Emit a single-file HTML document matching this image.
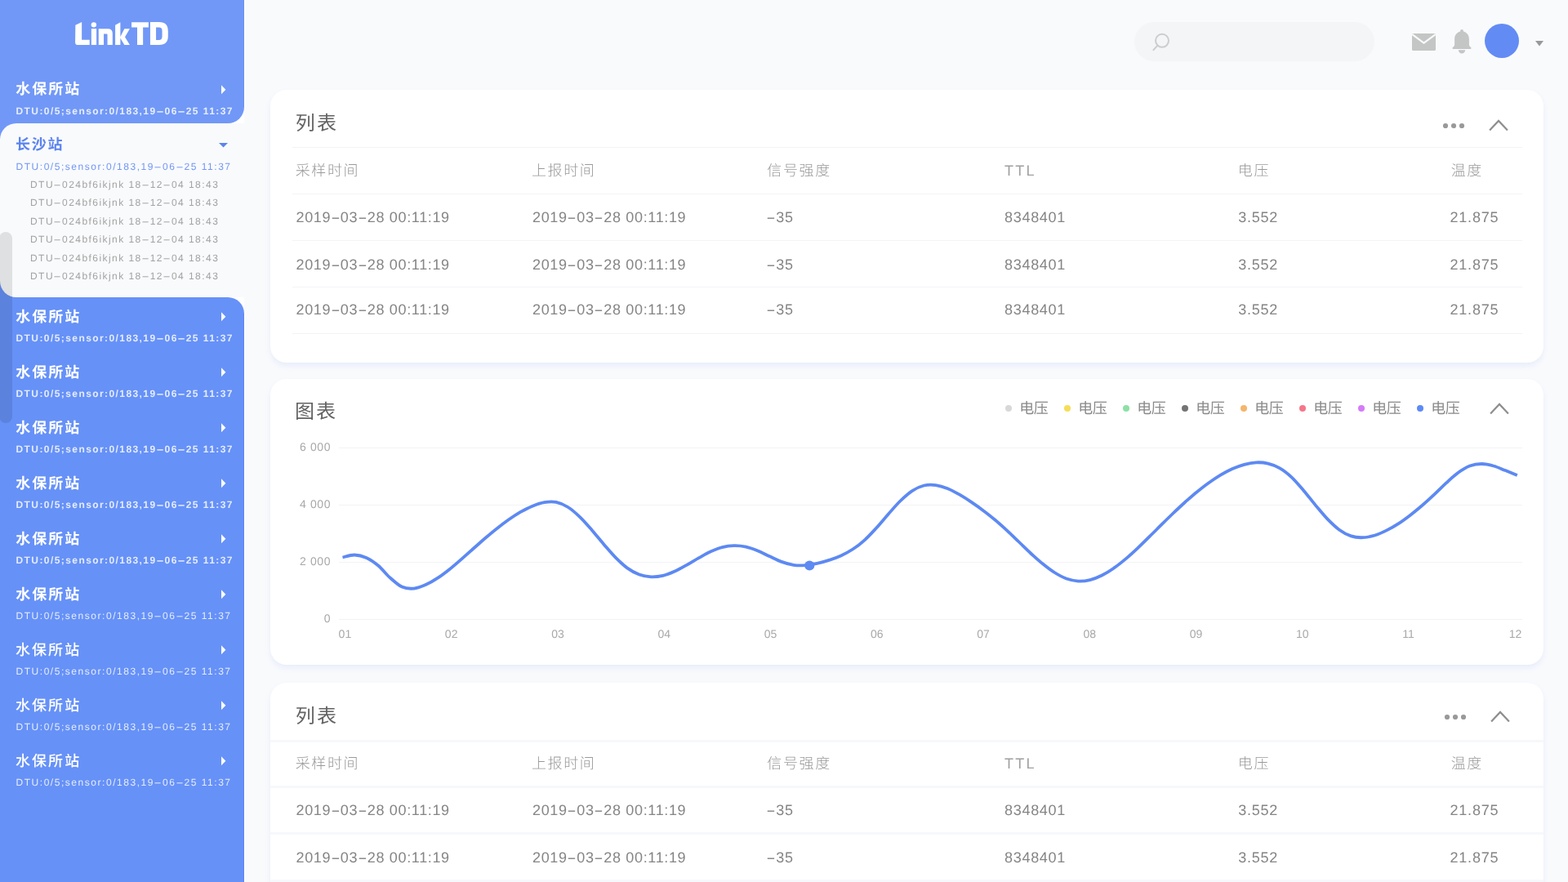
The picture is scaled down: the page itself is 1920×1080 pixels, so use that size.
<!DOCTYPE html>
<html lang="zh"><head><meta charset="utf-8"><title>LinkTD</title>
<style>
html,body{margin:0;padding:0}
body{width:1920px;height:1080px;overflow:hidden;position:relative;background:#f9fafc;font-family:"Liberation Sans",sans-serif;text-rendering:geometricPrecision}
#w{position:absolute;left:0;top:0;width:1920px;height:1080px;will-change:transform}
.b{position:absolute;display:block}
.t{position:absolute;white-space:nowrap}
.h12{display:inline-block;transform:scaleX(2.4);letter-spacing:0;margin:0 3.75px 0 2.25px}
.h18{display:inline-block;transform:scaleX(1.9);letter-spacing:0;margin:0 3.2px 0 2.5px}
.cj{position:absolute;display:block;white-space:nowrap;font-family:"Liberation Sans","Noto Sans CJK SC",sans-serif}
.sb{font-size:18px;line-height:18px;color:#fff;font-weight:700;letter-spacing:2.05px}
.sm{font-size:18px;line-height:18px;color:#fff;font-weight:500;letter-spacing:2.05px}
.ti{font-size:24px;line-height:24px;color:#636363;font-weight:400}
.th{font-size:18px;line-height:18px;color:#9a9a9a;font-weight:300;letter-spacing:1.6px}
.lg{font-size:18px;line-height:18px;color:#8a8a8a;font-weight:400;letter-spacing:-0.5px}
</style></head><body>
<div id="w">

<!-- sidebar -->
<div class="b" style="left:279px;top:131px;width:20px;height:20px;background:#fff;"></div>
<div class="b" style="left:279px;top:364px;width:20px;height:20px;background:#fff;"></div>
<div class="b" style="left:0px;top:0px;width:299px;height:151px;background:#7198f7;border-radius:0 0 20px 0;"></div>
<div class="b" style="left:0px;top:364px;width:299px;height:716px;background:#6691f7;border-radius:0 20px 0 0;"></div>
<div class="b" style="left:0px;top:151px;width:20px;height:20px;background:#7198f7;"></div>
<div class="b" style="left:0px;top:344px;width:20px;height:20px;background:#6691f7;"></div>
<div class="b" style="left:0px;top:151px;width:299px;height:213px;background:#f9fafc;border-radius:20px 0 0 20px;"></div>
<div class="b" style="left:299px;top:0px;width:1px;height:131px;background:#fff;"></div>
<div class="b" style="left:299px;top:384px;width:1px;height:696px;background:#fff;"></div>
<div class="b" style="left:298px;top:0px;width:1px;height:131px;background:#6890f6;"></div>
<div class="b" style="left:298px;top:384px;width:1px;height:696px;background:#5e8af6;"></div>
<svg class="b" style="left:60px;top:10px" width="180" height="101" viewBox="0 0 1920 1077" fill="#fff"><path d="M345,222 L428,182 L428,412 L530,412 L530,480 L378,480 Q342,480 342,444 Z"/><circle cx="585" cy="217" r="34"/><rect x="553" y="268" width="67" height="212"/><path d="M648,268 L770,268 Q830,268 830,330 L830,480 L763,480 L763,345 Q763,335 753,335 L715,335 L715,480 L648,480 Z"/><path d="M865,222 L932,185 L932,372 L985,270 L1055,270 L992,376 L1055,480 L985,480 L932,392 L932,480 L865,480 Z"/><path d="M1078,185 L1300,185 L1300,250 L1228,250 L1228,480 L1152,480 L1152,250 L1078,250 Z"/><path fill-rule="evenodd" d="M1322,182 L1440,182 Q1555,182 1555,300 L1555,365 Q1555,480 1440,480 L1322,480 Z M1398,250 L1435,250 Q1478,250 1478,295 L1478,370 Q1478,415 1435,415 L1398,415 Z"/></svg>
<span class="cj sb" style="left:19.14px;top:100.37px;width:78.15px;height:18.00px;">水保所站</span>
<div class="t" style="left:19.50px;top:127.50px;font-size:12px;line-height:17px;color:rgba(255,255,255,.82);letter-spacing:1.42px;font-weight:700;">DTU:0/5;sensor:0/183,19<span class="h12">-</span>06<span class="h12">-</span>25 11:37</div>
<svg class="b" style="left:271px;top:103.80px" width="6" height="12" viewBox="0 0 6 12"><path d="M0,0.3 L5.4,5.8 L0,11.3Z" fill="#fff"/></svg>
<span class="cj" style="left:19.03px;top:168.44px;width:57.60px;height:18.00px;font-size:18px;line-height:18px;color:#5b84ef;font-weight:700;letter-spacing:1.8px;">长沙站</span>
<div class="t" style="left:19.50px;top:195.80px;font-size:12px;line-height:17px;color:#7297f3;letter-spacing:1.54px;">DTU:0/5;sensor:0/183,19<span class="h12">-</span>06<span class="h12">-</span>25 11:37</div>
<svg class="b" style="left:268px;top:175px" width="11" height="6" viewBox="0 0 11 6"><path d="M0,0 L11,0 L5.5,5.4Z" fill="#5b84ef"/></svg>
<div class="t" style="left:37.00px;top:217.90px;font-size:12px;line-height:17px;color:#a3a3a3;letter-spacing:1.45px;">DTU<span class="h12">-</span>024bf6ikjnk 18<span class="h12">-</span>12<span class="h12">-</span>04 18:43</div>
<div class="t" style="left:37.00px;top:240.35px;font-size:12px;line-height:17px;color:#a3a3a3;letter-spacing:1.45px;">DTU<span class="h12">-</span>024bf6ikjnk 18<span class="h12">-</span>12<span class="h12">-</span>04 18:43</div>
<div class="t" style="left:37.00px;top:262.80px;font-size:12px;line-height:17px;color:#a3a3a3;letter-spacing:1.45px;">DTU<span class="h12">-</span>024bf6ikjnk 18<span class="h12">-</span>12<span class="h12">-</span>04 18:43</div>
<div class="t" style="left:37.00px;top:285.25px;font-size:12px;line-height:17px;color:#a3a3a3;letter-spacing:1.45px;">DTU<span class="h12">-</span>024bf6ikjnk 18<span class="h12">-</span>12<span class="h12">-</span>04 18:43</div>
<div class="t" style="left:37.00px;top:307.70px;font-size:12px;line-height:17px;color:#a3a3a3;letter-spacing:1.45px;">DTU<span class="h12">-</span>024bf6ikjnk 18<span class="h12">-</span>12<span class="h12">-</span>04 18:43</div>
<div class="t" style="left:37.00px;top:330.15px;font-size:12px;line-height:17px;color:#a3a3a3;letter-spacing:1.45px;">DTU<span class="h12">-</span>024bf6ikjnk 18<span class="h12">-</span>12<span class="h12">-</span>04 18:43</div>
<span class="cj sb" style="left:19.14px;top:378.57px;width:78.15px;height:18.00px;">水保所站</span>
<div class="t" style="left:19.50px;top:405.70px;font-size:12px;line-height:17px;color:rgba(255,255,255,.82);letter-spacing:1.42px;font-weight:700;">DTU:0/5;sensor:0/183,19<span class="h12">-</span>06<span class="h12">-</span>25 11:37</div>
<svg class="b" style="left:271px;top:382.00px" width="6" height="12" viewBox="0 0 6 12"><path d="M0,0.3 L5.4,5.8 L0,11.3Z" fill="#fff"/></svg>
<span class="cj sb" style="left:19.14px;top:446.57px;width:78.15px;height:18.00px;">水保所站</span>
<div class="t" style="left:19.50px;top:473.70px;font-size:12px;line-height:17px;color:rgba(255,255,255,.82);letter-spacing:1.42px;font-weight:700;">DTU:0/5;sensor:0/183,19<span class="h12">-</span>06<span class="h12">-</span>25 11:37</div>
<svg class="b" style="left:271px;top:450.00px" width="6" height="12" viewBox="0 0 6 12"><path d="M0,0.3 L5.4,5.8 L0,11.3Z" fill="#fff"/></svg>
<span class="cj sb" style="left:19.14px;top:514.57px;width:78.15px;height:18.00px;">水保所站</span>
<div class="t" style="left:19.50px;top:541.70px;font-size:12px;line-height:17px;color:rgba(255,255,255,.82);letter-spacing:1.42px;font-weight:700;">DTU:0/5;sensor:0/183,19<span class="h12">-</span>06<span class="h12">-</span>25 11:37</div>
<svg class="b" style="left:271px;top:518.00px" width="6" height="12" viewBox="0 0 6 12"><path d="M0,0.3 L5.4,5.8 L0,11.3Z" fill="#fff"/></svg>
<span class="cj sb" style="left:19.14px;top:582.57px;width:78.15px;height:18.00px;">水保所站</span>
<div class="t" style="left:19.50px;top:609.70px;font-size:12px;line-height:17px;color:rgba(255,255,255,.82);letter-spacing:1.42px;font-weight:700;">DTU:0/5;sensor:0/183,19<span class="h12">-</span>06<span class="h12">-</span>25 11:37</div>
<svg class="b" style="left:271px;top:586.00px" width="6" height="12" viewBox="0 0 6 12"><path d="M0,0.3 L5.4,5.8 L0,11.3Z" fill="#fff"/></svg>
<span class="cj sb" style="left:19.14px;top:650.57px;width:78.15px;height:18.00px;">水保所站</span>
<div class="t" style="left:19.50px;top:677.70px;font-size:12px;line-height:17px;color:rgba(255,255,255,.82);letter-spacing:1.42px;font-weight:700;">DTU:0/5;sensor:0/183,19<span class="h12">-</span>06<span class="h12">-</span>25 11:37</div>
<svg class="b" style="left:271px;top:654.00px" width="6" height="12" viewBox="0 0 6 12"><path d="M0,0.3 L5.4,5.8 L0,11.3Z" fill="#fff"/></svg>
<span class="cj sb" style="left:19.14px;top:718.57px;width:78.15px;height:18.00px;">水保所站</span>
<div class="t" style="left:19.50px;top:745.70px;font-size:12px;line-height:17px;color:rgba(255,255,255,.82);letter-spacing:1.54px;">DTU:0/5;sensor:0/183,19<span class="h12">-</span>06<span class="h12">-</span>25 11:37</div>
<svg class="b" style="left:271px;top:722.00px" width="6" height="12" viewBox="0 0 6 12"><path d="M0,0.3 L5.4,5.8 L0,11.3Z" fill="#fff"/></svg>
<span class="cj sm" style="left:19.00px;top:786.59px;width:78.15px;height:18.00px;">水保所站</span>
<div class="t" style="left:19.50px;top:813.70px;font-size:12px;line-height:17px;color:rgba(255,255,255,.82);letter-spacing:1.54px;">DTU:0/5;sensor:0/183,19<span class="h12">-</span>06<span class="h12">-</span>25 11:37</div>
<svg class="b" style="left:271px;top:790.00px" width="6" height="12" viewBox="0 0 6 12"><path d="M0,0.3 L5.4,5.8 L0,11.3Z" fill="#fff"/></svg>
<span class="cj sm" style="left:19.00px;top:854.59px;width:78.15px;height:18.00px;">水保所站</span>
<div class="t" style="left:19.50px;top:881.70px;font-size:12px;line-height:17px;color:rgba(255,255,255,.82);letter-spacing:1.54px;">DTU:0/5;sensor:0/183,19<span class="h12">-</span>06<span class="h12">-</span>25 11:37</div>
<svg class="b" style="left:271px;top:858.00px" width="6" height="12" viewBox="0 0 6 12"><path d="M0,0.3 L5.4,5.8 L0,11.3Z" fill="#fff"/></svg>
<span class="cj sm" style="left:19.00px;top:922.59px;width:78.15px;height:18.00px;">水保所站</span>
<div class="t" style="left:19.50px;top:949.70px;font-size:12px;line-height:17px;color:rgba(255,255,255,.82);letter-spacing:1.54px;">DTU:0/5;sensor:0/183,19<span class="h12">-</span>06<span class="h12">-</span>25 11:37</div>
<svg class="b" style="left:271px;top:926.00px" width="6" height="12" viewBox="0 0 6 12"><path d="M0,0.3 L5.4,5.8 L0,11.3Z" fill="#fff"/></svg>
<div class="b" style="left:-1.2px;top:283.7px;width:15.8px;height:234px;background:rgba(0,0,0,.10);border-radius:7.9px;"></div>
<!-- header -->
<div class="b" style="left:1389px;top:27px;width:294px;height:48px;background:#f4f5f7;border-radius:24px;"></div>
<svg class="b" style="left:1405px;top:36px" width="32" height="32" viewBox="0 0 32 32" fill="none" stroke="#cdcdcd" stroke-width="2"><circle cx="18" cy="13.8" r="8"/><path d="M12.5,19.6 L7.4,25.2" stroke-linecap="round"/></svg>
<svg class="b" style="left:1729px;top:41px" width="29" height="21" viewBox="0 0 29 21"><rect width="29" height="21" rx="1.6" fill="#c4c6c5"/><path d="M0.3,1.2 L14.5,11.6 L28.7,1.2" fill="none" stroke="#f9fafc" stroke-width="2.1"/></svg>
<svg class="b" style="left:1777px;top:35px" width="26" height="31" viewBox="0 0 26 31" fill="#c4c6c5"><path d="M13,1 a1.9,1.9 0 0 1 1.9,1.9 v0.7 c4.2,1 7,4.6 7,9.3 v6.6 c0,1.6 0.9,2.6 2.2,3.6 c0.8,0.6 0.5,1.9 -0.6,1.9 H2.5 c-1.1,0 -1.4,-1.3 -0.6,-1.9 c1.3,-1 2.2,-2 2.2,-3.6 v-6.6 c0,-4.7 2.8,-8.3 7,-9.3 v-0.7 A1.9,1.9 0 0 1 13,1z"/><path d="M8.8,26.2 h8.4 a4.2,4.2 0 0 1 -8.4,0z"/></svg>
<div class="b" style="left:1818px;top:29px;width:42px;height:42px;background:#628bf4;border-radius:50%;"></div>
<svg class="b" style="left:1880px;top:50px" width="10" height="7" viewBox="0 0 10 7"><path d="M0,0 L10,0 L5,6.6Z" fill="#999"/></svg>
<!-- table card -->
<div class="b" style="left:331px;top:110px;width:1559px;height:334px;background:#fff;border-radius:20px;box-shadow:0 4px 7px rgba(70,120,245,.095);"></div>
<span class="cj ti" style="left:361.73px;top:139.54px;width:50.25px;height:24.00px;letter-spacing:2.25px;">列表</span>
<svg class="b" style="left:1766.00px;top:150.06px" width="30" height="8" viewBox="0 0 30 8" fill="#999"><circle cx="4" cy="4" r="3.1"/><circle cx="14" cy="4" r="3.1"/><circle cx="24" cy="4" r="3.1"/></svg>
<svg class="b" style="left:1822.30px;top:145.00px" width="26" height="17" viewBox="0 0 26 17" fill="none" stroke="#8e8e8e" stroke-width="2.2"><path d="M2.1,14.4 L13,2.9 L23.9,14.4"/></svg>
<div class="b" style="left:358px;top:180px;width:1506px;height:1px;background:#f3f4f7;"></div>
<div class="b" style="left:358px;top:237px;width:1506px;height:1px;background:#f3f4f7;"></div>
<div class="b" style="left:358px;top:294px;width:1506px;height:1px;background:#f3f4f7;"></div>
<div class="b" style="left:358px;top:351px;width:1506px;height:1px;background:#f3f4f7;"></div>
<div class="b" style="left:358px;top:408px;width:1506px;height:1px;background:#f3f4f7;"></div>
<span class="cj th" style="left:361.74px;top:199.76px;width:76.80px;height:18.00px;">采样时间</span>
<span class="cj th" style="left:650.99px;top:199.74px;width:76.80px;height:18.00px;">上报时间</span>
<span class="cj th" style="left:939.33px;top:199.71px;width:76.80px;height:18.00px;">信号强度</span>
<div class="t" style="left:1230.00px;top:197.05px;font-size:18px;line-height:25px;color:#a0a0a0;letter-spacing:2.2px;">TTL</div>
<span class="cj th" style="left:1515.82px;top:199.77px;width:37.60px;height:18.00px;">电压</span>
<span class="cj th" style="left:1776.69px;top:199.78px;width:37.60px;height:18.00px;">温度</span>
<div class="t" style="left:362.50px;top:254.40px;font-size:18px;line-height:25px;color:#858585;letter-spacing:0.65px;">2019<span class="h18">-</span>03<span class="h18">-</span>28 00:11:19</div>
<div class="t" style="left:652.00px;top:254.40px;font-size:18px;line-height:25px;color:#858585;letter-spacing:0.65px;">2019<span class="h18">-</span>03<span class="h18">-</span>28 00:11:19</div>
<div class="t" style="left:938.50px;top:254.40px;font-size:18px;line-height:25px;color:#858585;letter-spacing:0.7px;"><span class="h18">-</span>35</div>
<div class="t" style="left:1230.00px;top:254.40px;font-size:18px;line-height:25px;color:#858585;letter-spacing:0.7px;">8348401</div>
<div class="t" style="left:1516.25px;top:254.40px;font-size:18px;line-height:25px;color:#858585;letter-spacing:0.74px;">3.552</div>
<div class="t" style="left:1775.50px;top:254.40px;font-size:18px;line-height:25px;color:#858585;letter-spacing:0.8px;">21.875</div>
<div class="t" style="left:362.50px;top:312.40px;font-size:18px;line-height:25px;color:#858585;letter-spacing:0.65px;">2019<span class="h18">-</span>03<span class="h18">-</span>28 00:11:19</div>
<div class="t" style="left:652.00px;top:312.40px;font-size:18px;line-height:25px;color:#858585;letter-spacing:0.65px;">2019<span class="h18">-</span>03<span class="h18">-</span>28 00:11:19</div>
<div class="t" style="left:938.50px;top:312.40px;font-size:18px;line-height:25px;color:#858585;letter-spacing:0.7px;"><span class="h18">-</span>35</div>
<div class="t" style="left:1230.00px;top:312.40px;font-size:18px;line-height:25px;color:#858585;letter-spacing:0.7px;">8348401</div>
<div class="t" style="left:1516.25px;top:312.40px;font-size:18px;line-height:25px;color:#858585;letter-spacing:0.74px;">3.552</div>
<div class="t" style="left:1775.50px;top:312.40px;font-size:18px;line-height:25px;color:#858585;letter-spacing:0.8px;">21.875</div>
<div class="t" style="left:362.50px;top:367.40px;font-size:18px;line-height:25px;color:#858585;letter-spacing:0.65px;">2019<span class="h18">-</span>03<span class="h18">-</span>28 00:11:19</div>
<div class="t" style="left:652.00px;top:367.40px;font-size:18px;line-height:25px;color:#858585;letter-spacing:0.65px;">2019<span class="h18">-</span>03<span class="h18">-</span>28 00:11:19</div>
<div class="t" style="left:938.50px;top:367.40px;font-size:18px;line-height:25px;color:#858585;letter-spacing:0.7px;"><span class="h18">-</span>35</div>
<div class="t" style="left:1230.00px;top:367.40px;font-size:18px;line-height:25px;color:#858585;letter-spacing:0.7px;">8348401</div>
<div class="t" style="left:1516.25px;top:367.40px;font-size:18px;line-height:25px;color:#858585;letter-spacing:0.74px;">3.552</div>
<div class="t" style="left:1775.50px;top:367.40px;font-size:18px;line-height:25px;color:#858585;letter-spacing:0.8px;">21.875</div>
<!-- chart card -->
<div class="b" style="left:331px;top:464px;width:1559px;height:350px;background:#fff;border-radius:20px;box-shadow:0 4px 7px rgba(70,120,245,.095);"></div>
<span class="cj ti" style="left:360.98px;top:492.80px;width:50.10px;height:24.00px;letter-spacing:2.1px;">图表</span>
<div class="b" style="left:1231px;top:496px;width:8px;height:8px;background:#d8d8d8;border-radius:50%;"></div>
<span class="cj lg" style="left:1248.28px;top:490.59px;width:35.50px;height:18.00px;">电压</span>
<div class="b" style="left:1303px;top:496px;width:8px;height:8px;background:#f5de57;border-radius:50%;"></div>
<span class="cj lg" style="left:1320.28px;top:490.59px;width:35.50px;height:18.00px;">电压</span>
<div class="b" style="left:1375px;top:496px;width:8px;height:8px;background:#8de0a6;border-radius:50%;"></div>
<span class="cj lg" style="left:1392.28px;top:490.59px;width:35.50px;height:18.00px;">电压</span>
<div class="b" style="left:1447px;top:496px;width:8px;height:8px;background:#747474;border-radius:50%;"></div>
<span class="cj lg" style="left:1464.28px;top:490.59px;width:35.50px;height:18.00px;">电压</span>
<div class="b" style="left:1519px;top:496px;width:8px;height:8px;background:#f5b56b;border-radius:50%;"></div>
<span class="cj lg" style="left:1536.28px;top:490.59px;width:35.50px;height:18.00px;">电压</span>
<div class="b" style="left:1591px;top:496px;width:8px;height:8px;background:#f57789;border-radius:50%;"></div>
<span class="cj lg" style="left:1608.28px;top:490.59px;width:35.50px;height:18.00px;">电压</span>
<div class="b" style="left:1663px;top:496px;width:8px;height:8px;background:#d47bf9;border-radius:50%;"></div>
<span class="cj lg" style="left:1680.28px;top:490.59px;width:35.50px;height:18.00px;">电压</span>
<div class="b" style="left:1735px;top:496px;width:8px;height:8px;background:#5d8af6;border-radius:50%;"></div>
<span class="cj lg" style="left:1752.28px;top:490.59px;width:35.50px;height:18.00px;">电压</span>
<svg class="b" style="left:1823.00px;top:492.10px" width="26" height="17" viewBox="0 0 26 17" fill="none" stroke="#8e8e8e" stroke-width="2.2"><path d="M2.1,14.4 L13,2.9 L23.9,14.4"/></svg>
<div class="t" style="right:1514.90px;top:536.80px;font-size:14px;line-height:20px;color:#a8a8a8;letter-spacing:0.6px;">6 000</div>
<div class="b" style="left:414.5px;top:548px;width:1449px;height:1px;background:#f3f3f5;"></div>
<div class="t" style="right:1514.90px;top:606.80px;font-size:14px;line-height:20px;color:#a8a8a8;letter-spacing:0.6px;">4 000</div>
<div class="b" style="left:414.5px;top:618px;width:1449px;height:1px;background:#f3f3f5;"></div>
<div class="t" style="right:1514.90px;top:676.80px;font-size:14px;line-height:20px;color:#a8a8a8;letter-spacing:0.6px;">2 000</div>
<div class="b" style="left:414.5px;top:688px;width:1449px;height:1px;background:#f3f3f5;"></div>
<div class="t" style="right:1514.90px;top:746.80px;font-size:14px;line-height:20px;color:#a8a8a8;letter-spacing:0.6px;">0</div>
<div class="b" style="left:414.5px;top:758px;width:1449px;height:1px;background:#f3f3f5;"></div>
<div class="t" style="left:414.60px;top:766.25px;font-size:14px;line-height:20px;color:#a8a8a8;">01</div>
<div class="t" style="left:544.87px;top:766.25px;font-size:14px;line-height:20px;color:#a8a8a8;">02</div>
<div class="t" style="left:675.14px;top:766.25px;font-size:14px;line-height:20px;color:#a8a8a8;">03</div>
<div class="t" style="left:805.41px;top:766.25px;font-size:14px;line-height:20px;color:#a8a8a8;">04</div>
<div class="t" style="left:935.68px;top:766.25px;font-size:14px;line-height:20px;color:#a8a8a8;">05</div>
<div class="t" style="left:1065.95px;top:766.25px;font-size:14px;line-height:20px;color:#a8a8a8;">06</div>
<div class="t" style="left:1196.22px;top:766.25px;font-size:14px;line-height:20px;color:#a8a8a8;">07</div>
<div class="t" style="left:1326.49px;top:766.25px;font-size:14px;line-height:20px;color:#a8a8a8;">08</div>
<div class="t" style="left:1456.76px;top:766.25px;font-size:14px;line-height:20px;color:#a8a8a8;">09</div>
<div class="t" style="left:1587.03px;top:766.25px;font-size:14px;line-height:20px;color:#a8a8a8;">10</div>
<div class="t" style="left:1717.30px;top:766.25px;font-size:14px;line-height:20px;color:#a8a8a8;">11</div>
<div class="t" style="right:56.60px;top:766.25px;font-size:14px;line-height:20px;color:#a8a8a8;">12</div>
<svg class="b" style="left:331px;top:464px" width="1559" height="350" viewBox="331 464 1559 350"><path d="M419.5,682.5C421.9,682.0 429.2,679.5 434.0,679.5C438.9,679.6 443.7,680.7 448.6,682.9C453.4,685.1 458.2,688.4 463.1,692.5C467.9,696.6 472.8,703.0 477.6,707.4C482.5,711.7 487.3,716.4 492.1,718.6C497.0,720.8 501.8,721.0 506.7,720.6C511.5,720.2 516.4,718.2 521.2,716.1C526.0,714.0 530.9,711.1 535.7,707.9C540.6,704.8 545.4,701.1 550.3,697.2C555.1,693.4 559.9,689.1 564.8,684.9C569.6,680.8 574.5,676.3 579.3,672.0C584.2,667.8 589.0,663.4 593.8,659.3C598.7,655.1 603.5,651.0 608.4,647.2C613.2,643.3 618.1,639.6 622.9,636.2C627.7,632.9 632.6,629.7 637.4,626.9C642.3,624.2 647.1,621.7 652.0,619.7C656.8,617.8 661.6,616.0 666.5,615.2C671.3,614.4 676.2,614.0 681.0,614.9C685.9,615.9 690.7,617.9 695.5,621.0C700.4,624.0 705.2,628.4 710.1,633.1C714.9,637.7 719.8,643.4 724.6,648.9C729.4,654.5 734.3,660.6 739.1,666.2C744.0,671.8 748.8,677.7 753.7,682.6C758.5,687.4 763.3,692.1 768.2,695.6C773.0,699.1 777.9,701.7 782.7,703.5C787.5,705.3 792.4,706.1 797.2,706.4C802.1,706.6 806.9,706.0 811.8,704.9C816.6,703.8 821.4,701.8 826.3,699.6C831.1,697.5 836.0,694.6 840.8,691.9C845.7,689.2 850.5,686.1 855.3,683.4C860.2,680.7 865.0,677.8 869.9,675.6C874.7,673.4 879.6,671.4 884.4,670.2C889.2,668.9 894.1,668.2 898.9,668.1C903.8,668.0 908.6,668.5 913.5,669.6C918.3,670.6 923.1,672.5 928.0,674.4C932.8,676.4 937.7,679.1 942.5,681.3C947.4,683.6 952.2,686.2 957.0,687.9C961.9,689.7 966.7,691.1 971.6,691.8C976.4,692.6 981.3,692.5 986.1,692.2C990.9,691.9 995.8,691.0 1000.6,689.9C1005.5,688.9 1010.3,687.5 1015.2,685.9C1020.0,684.3 1024.8,682.6 1029.7,680.4C1034.5,678.2 1039.4,675.7 1044.2,672.5C1049.1,669.4 1053.9,665.7 1058.7,661.3C1063.6,657.0 1068.4,651.6 1073.3,646.3C1078.1,641.0 1083.0,635.0 1087.8,629.5C1092.6,624.0 1097.5,618.2 1102.3,613.5C1107.2,608.8 1112.0,604.2 1116.9,601.1C1121.7,597.9 1126.5,595.7 1131.4,594.5C1136.2,593.4 1141.1,593.5 1145.9,594.1C1150.8,594.8 1155.6,596.4 1160.4,598.3C1165.3,600.3 1170.1,603.0 1175.0,605.7C1179.8,608.5 1184.7,611.6 1189.5,614.9C1194.3,618.1 1199.2,621.5 1204.0,625.2C1208.9,628.8 1213.7,632.7 1218.6,636.8C1223.4,640.8 1228.2,645.2 1233.1,649.6C1237.9,654.1 1242.8,658.9 1247.6,663.5C1252.5,668.2 1257.3,673.0 1262.1,677.5C1267.0,681.9 1271.8,686.4 1276.7,690.3C1281.5,694.2 1286.4,698.0 1291.2,701.0C1296.0,704.0 1300.9,706.7 1305.7,708.5C1310.6,710.2 1315.4,711.3 1320.3,711.6C1325.1,711.9 1329.9,711.3 1334.8,710.1C1339.6,708.9 1344.5,706.9 1349.3,704.5C1354.2,702.1 1359.0,699.1 1363.8,695.7C1368.7,692.4 1373.5,688.5 1378.4,684.4C1383.2,680.3 1388.1,675.8 1392.9,671.3C1397.7,666.7 1402.6,661.9 1407.4,657.1C1412.3,652.4 1417.1,647.5 1422.0,642.7C1426.8,637.9 1431.6,633.2 1436.5,628.5C1441.3,623.9 1446.2,619.4 1451.0,615.0C1455.9,610.7 1460.7,606.4 1465.5,602.5C1470.4,598.5 1475.2,594.7 1480.1,591.2C1484.9,587.8 1489.8,584.5 1494.6,581.6C1499.4,578.8 1504.3,576.2 1509.1,574.0C1514.0,571.9 1518.8,570.1 1523.6,568.8C1528.5,567.5 1533.3,566.5 1538.2,566.3C1543.0,566.1 1547.9,566.4 1552.7,567.6C1557.5,568.7 1562.4,570.5 1567.2,573.4C1572.1,576.2 1576.9,580.1 1581.8,584.6C1586.6,589.2 1591.4,595.0 1596.3,600.7C1601.1,606.3 1606.0,612.8 1610.8,618.6C1615.7,624.4 1620.5,630.4 1625.3,635.4C1630.2,640.4 1635.0,645.2 1639.9,648.7C1644.7,652.2 1649.6,654.8 1654.4,656.4C1659.2,658.0 1664.1,658.4 1668.9,658.2C1673.8,658.1 1678.6,656.9 1683.5,655.5C1688.3,654.0 1693.1,651.8 1698.0,649.4C1702.8,647.0 1707.7,644.2 1712.5,641.1C1717.4,638.0 1722.2,634.4 1727.0,630.7C1731.9,627.0 1736.7,623.0 1741.6,618.8C1746.4,614.6 1751.3,610.1 1756.1,605.6C1760.9,601.1 1765.8,596.1 1770.6,591.6C1775.5,587.2 1780.3,582.6 1785.2,579.0C1790.0,575.5 1794.8,572.4 1799.7,570.5C1804.5,568.7 1809.4,568.0 1814.2,568.0C1819.1,568.0 1823.9,569.1 1828.7,570.5C1833.6,571.8 1838.4,574.2 1843.3,576.1C1848.1,578.1 1855.4,581.1 1857.8,582.1" fill="none" stroke="#5d89f2" stroke-width="3.8"/><circle cx="991.25" cy="692.5" r="6.1" fill="#5d89f2"/></svg>
<!-- table card -->
<div class="b" style="left:331px;top:836px;width:1559px;height:300px;background:#fff;border-radius:20px;box-shadow:0 4px 7px rgba(70,120,245,.095);"></div>
<span class="cj ti" style="left:361.73px;top:865.54px;width:50.25px;height:24.00px;letter-spacing:2.25px;">列表</span>
<svg class="b" style="left:1768.00px;top:873.75px" width="30" height="8" viewBox="0 0 30 8" fill="#999"><circle cx="4" cy="4" r="3.1"/><circle cx="14" cy="4" r="3.1"/><circle cx="24" cy="4" r="3.1"/></svg>
<svg class="b" style="left:1823.50px;top:869.45px" width="26" height="17" viewBox="0 0 26 17" fill="none" stroke="#8e8e8e" stroke-width="2.2"><path d="M2.1,14.4 L13,2.9 L23.9,14.4"/></svg>
<div class="b" style="left:331px;top:906.2px;width:1559px;height:3px;background:#f7f8fb;"></div>
<div class="b" style="left:331px;top:961.5px;width:1559px;height:3px;background:#f7f8fb;"></div>
<div class="b" style="left:331px;top:1018.5px;width:1559px;height:3px;background:#f7f8fb;"></div>
<div class="b" style="left:331px;top:1077.3px;width:1559px;height:3px;background:#f7f8fb;"></div>
<span class="cj th" style="left:361.74px;top:925.76px;width:76.80px;height:18.00px;">采样时间</span>
<span class="cj th" style="left:650.99px;top:925.74px;width:76.80px;height:18.00px;">上报时间</span>
<span class="cj th" style="left:939.33px;top:925.71px;width:76.80px;height:18.00px;">信号强度</span>
<div class="t" style="left:1230.00px;top:923.05px;font-size:18px;line-height:25px;color:#a0a0a0;letter-spacing:2.2px;">TTL</div>
<span class="cj th" style="left:1515.82px;top:925.77px;width:37.60px;height:18.00px;">电压</span>
<span class="cj th" style="left:1776.69px;top:925.78px;width:37.60px;height:18.00px;">温度</span>
<div class="t" style="left:362.50px;top:980.20px;font-size:18px;line-height:25px;color:#858585;letter-spacing:0.65px;">2019<span class="h18">-</span>03<span class="h18">-</span>28 00:11:19</div>
<div class="t" style="left:652.00px;top:980.20px;font-size:18px;line-height:25px;color:#858585;letter-spacing:0.65px;">2019<span class="h18">-</span>03<span class="h18">-</span>28 00:11:19</div>
<div class="t" style="left:938.50px;top:980.20px;font-size:18px;line-height:25px;color:#858585;letter-spacing:0.7px;"><span class="h18">-</span>35</div>
<div class="t" style="left:1230.00px;top:980.20px;font-size:18px;line-height:25px;color:#858585;letter-spacing:0.7px;">8348401</div>
<div class="t" style="left:1516.25px;top:980.20px;font-size:18px;line-height:25px;color:#858585;letter-spacing:0.74px;">3.552</div>
<div class="t" style="left:1775.50px;top:980.20px;font-size:18px;line-height:25px;color:#858585;letter-spacing:0.8px;">21.875</div>
<div class="t" style="left:362.50px;top:1038.10px;font-size:18px;line-height:25px;color:#858585;letter-spacing:0.65px;">2019<span class="h18">-</span>03<span class="h18">-</span>28 00:11:19</div>
<div class="t" style="left:652.00px;top:1038.10px;font-size:18px;line-height:25px;color:#858585;letter-spacing:0.65px;">2019<span class="h18">-</span>03<span class="h18">-</span>28 00:11:19</div>
<div class="t" style="left:938.50px;top:1038.10px;font-size:18px;line-height:25px;color:#858585;letter-spacing:0.7px;"><span class="h18">-</span>35</div>
<div class="t" style="left:1230.00px;top:1038.10px;font-size:18px;line-height:25px;color:#858585;letter-spacing:0.7px;">8348401</div>
<div class="t" style="left:1516.25px;top:1038.10px;font-size:18px;line-height:25px;color:#858585;letter-spacing:0.74px;">3.552</div>
<div class="t" style="left:1775.50px;top:1038.10px;font-size:18px;line-height:25px;color:#858585;letter-spacing:0.8px;">21.875</div>
</div>
</body></html>
